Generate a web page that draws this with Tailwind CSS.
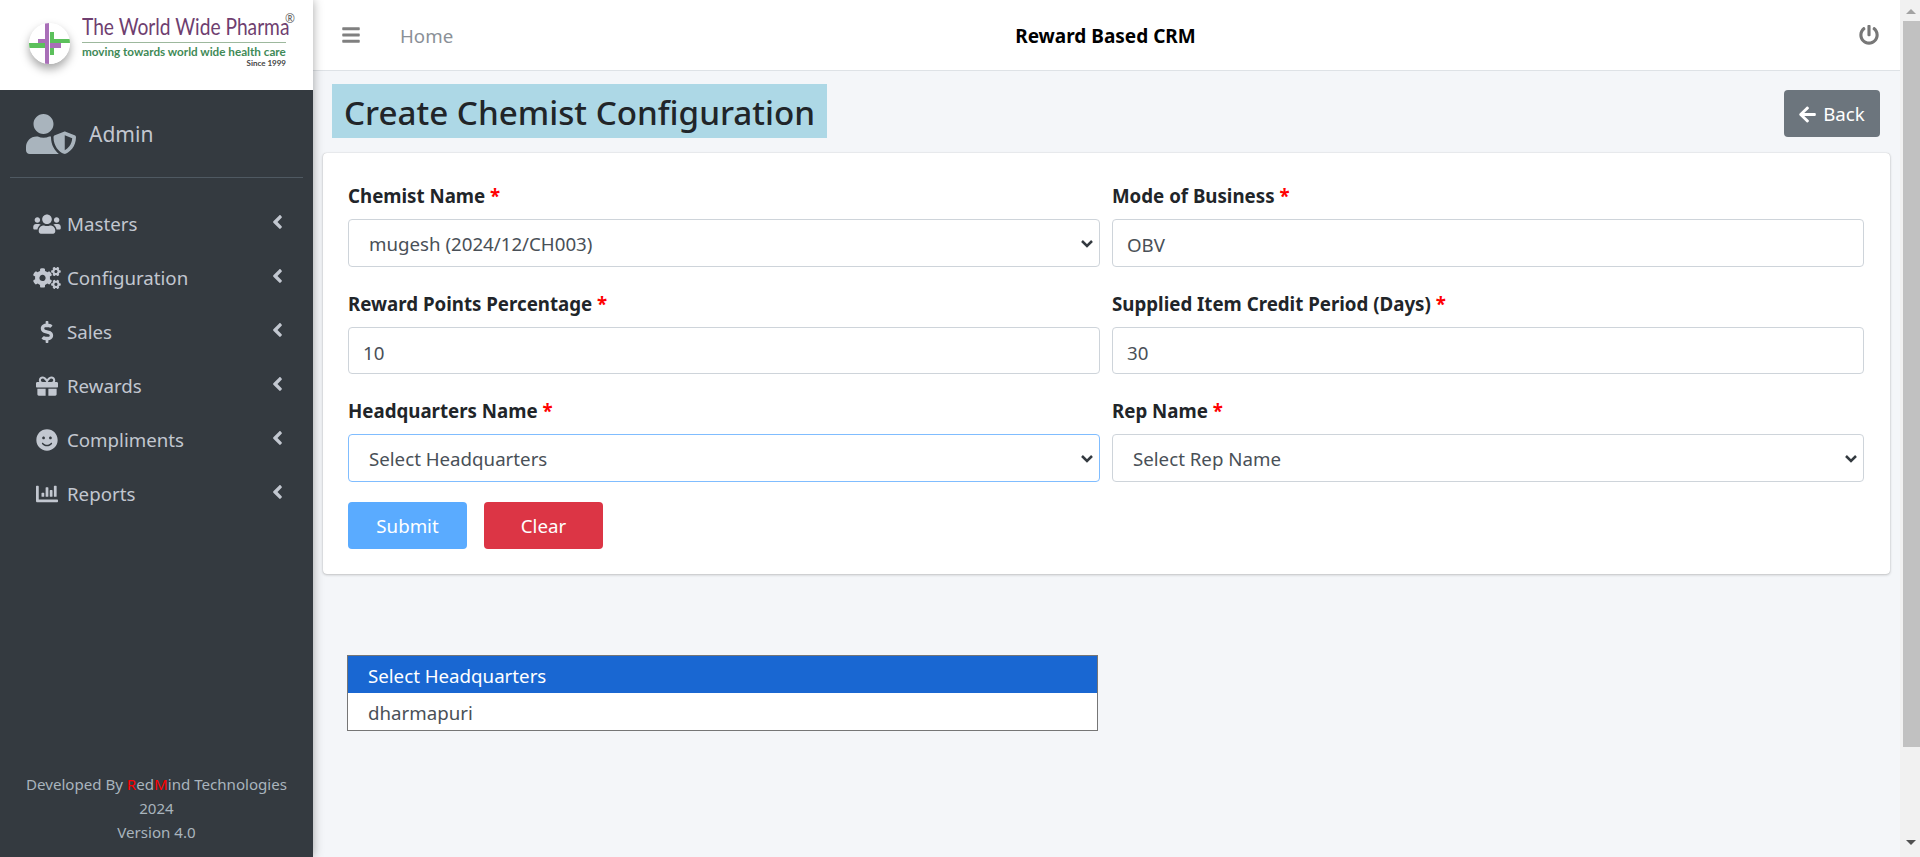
<!DOCTYPE html>
<html lang="en">
<head>
    <meta charset="UTF-8">
    <title>Create Chemist Configuration</title>
    <script src="https://cdn.jsdelivr.net/npm/@tailwindcss/browser@4"></script>
</head>
<body class="h-[857px] overflow-hidden bg-[#f4f6f9] font-['Noto_Sans',sans-serif] text-[18.7px] text-[#212529]">
    <div class="flex h-[857px]">
        <!-- Sidebar -->
        <aside class="z-10 flex w-[313px] shrink-0 flex-col bg-[#343a40] shadow-[0_0_10px_rgba(0,0,0,0.35)]">
            <div class="flex h-[90px] items-start bg-white pl-[29px] pt-[14px]">
                <svg class="mt-[9px] h-[41px] w-[41px] shrink-0 rounded-full shadow-[0_5px_10px_rgba(0,0,0,0.35)]" viewBox="0 0 41 41">
                    <circle cx="20.5" cy="20.5" r="20.5" fill="#fff"/>
                    <path d="M0 20h20v5H0zM25 16h16v4H25zM21 9h4v23h-4z" fill="#5cc05c"/>
                    <path d="M16 0h4v41h-4zM9 16h7v4H9zM21 20h11v5H21z" fill="#a96fb8"/>
                </svg>
                <div class="ml-[12px] w-[204px] font-['Lato',sans-serif]">
                    <div class="relative mt-[3px] h-[24px] origin-bottom scale-y-125 text-[19.2px] leading-[24px] whitespace-nowrap text-[#6f3f70]">The World Wide Pharma</div>
                    <div class="mt-[1px] border-t border-[#9db89d] pt-[1px] text-[11.7px] leading-[14px] font-bold whitespace-nowrap text-[#3f8a57]">moving towards world wide health care</div>
                    <div class="text-right text-[8px] leading-[10px] font-bold text-[#444]">Since 1999</div>
                </div>
                <span class="ml-[-1px] mt-[-2px] text-[12px] leading-[14px] text-[#666]">®</span>
            </div>

            <div class="mx-[10px] flex h-[88px] items-center border-b border-[#4f5962] pl-[16px]">
                <svg class="h-[40px] w-[50px] fill-[#a9b4bd]" viewBox="0 0 640 512"><path d="M622.3 271.1l-115.2-45c-3.500-1.400-7.300-2.100-11.100-2.100s-7.600.7-11.100 2.100l-115.2 45c-10.700 4.200-17.700 14-17.700 24.900 0 111.600 68.700 188.800 132.900 213.900 3.500 1.400 7.300 2.100 11.100 2.100s7.600-.7 11.100-2.100C558.400 484.900 640 416.500 640 296c0-10.900-7-20.700-17.700-24.900zM496 462.400V273.300l95.500 37.300c-5.600 87.100-60.900 135.400-95.500 151.800zM224 256c70.700 0 128-57.300 128-128S294.700 0 224 0 96 57.300 96 128s57.300 128 128 128zm96 40c0-2.500.8-4.800 1.100-7.200-2.500-.1-4.900-.8-7.500-.8h-16.700c-22.200 10.200-46.900 16-72.900 16s-50.600-5.800-72.900-16h-16.700C60.200 288 0 348.200 0 422.400V464c0 26.500 21.500 48 48 48h352c6.800 0 13.300-1.500 19.100-4-54-42.900-99.100-116.700-99.100-212z"/></svg>
                <span class="ml-[13px] pt-[3px] text-[21px] text-[#c2c7d0]">Admin</span>
            </div>

            <nav class="mt-[19px] flex flex-col text-[#c2c7d0]">
                <a class="flex h-[54px] items-center pl-[33px] pr-[30px]">
                    <span class="flex w-[28px] justify-center"><svg class="h-[22px] w-[28px] fill-[#c2c7d0]" viewBox="0 0 640 512"><path d="M96 224c35.300 0 64-28.700 64-64s-28.700-64-64-64-64 28.700-64 64 28.700 64 64 64zm448 0c35.300 0 64-28.700 64-64s-28.700-64-64-64-64 28.700-64 64 28.700 64 64 64zm32 32h-64c-17.600 0-33.500 7.100-45.100 18.600 40.300 22.100 68.900 62 75.100 109.400h66c17.700 0 32-14.300 32-32v-32c0-35.300-28.700-64-64-64zm-256 0c61.900 0 112-50.100 112-112S381.900 32 320 32 208 82.100 208 144s50.100 112 112 112zm76.800 32h-8.300c-20.800 10-43.900 16-68.500 16s-47.600-6-68.500-16h-8.300C179.600 288 128 339.600 128 403.200V432c0 26.500 21.500 48 48 48h288c26.500 0 48-21.500 48-48v-28.800c0-63.600-51.600-115.200-115.200-115.200zm-223.700-13.400C161.500 263.100 145.600 256 128 256H64c-35.300 0-64 28.700-64 64v32c0 17.700 14.300 32 32 32h65.900c6.300-47.400 34.900-87.300 75.200-109.400z"/></svg></span>
                    <span class="ml-[6px] flex-1">Masters</span>
                    <svg class="mb-[5px] h-[22px] w-[11px] fill-[#c2c7d0]" viewBox="0 0 256 512"><path d="M31.700 239l136-136c9.400-9.400 24.600-9.400 33.900 0l22.600 22.600c9.400 9.400 9.400 24.600 0 33.900L127.900 256l96.400 96.400c9.400 9.400 9.400 24.600 0 33.900L201.700 409c-9.400 9.400-24.600 9.400-33.900 0l-136-136c-9.500-9.400-9.500-24.600-.1-34z"/></svg>
                </a>
                <a class="flex h-[54px] items-center pl-[33px] pr-[30px]">
                    <span class="flex w-[28px] justify-center"><svg class="h-[22px] w-[28px] fill-[#c2c7d0]" viewBox="0 0 640 512"><path d="M512.100 191l-8.200 14.300c-3 5.300-9.400 7.500-15.100 5.400-11.800-4.400-22.600-10.700-32.100-18.600-4.600-3.800-5.800-10.500-2.800-15.700l8.200-14.300c-6.900-8-12.300-17.300-15.900-27.400h-16.500c-6 0-11.200-4.300-12.200-10.300-2-12-2.100-24.600 0-37.100 1-6 6.200-10.400 12.200-10.400h16.500c3.600-10.100 9-19.400 15.900-27.400l-8.200-14.300c-3-5.200-1.900-11.900 2.800-15.700 9.500-7.900 20.400-14.200 32.100-18.600 5.700-2.100 12.100.1 15.100 5.400l8.200 14.300c10.500-1.900 21.200-1.900 31.700 0L552 6.300c3-5.300 9.400-7.500 15.100-5.400 11.800 4.400 22.600 10.700 32.100 18.600 4.600 3.800 5.800 10.500 2.800 15.700l-8.200 14.300c6.900 8 12.300 17.300 15.900 27.400h16.500c6 0 11.200 4.300 12.200 10.300 2 12 2.100 24.600 0 37.100-1 6-6.200 10.400-12.200 10.400h-16.500c-3.600 10.100-9 19.400-15.900 27.400l8.200 14.300c3 5.200 1.900 11.900-2.800 15.700-9.500 7.900-20.400 14.200-32.100 18.600-5.700 2.100-12.100-.1-15.100-5.400l-8.200-14.300c-10.400 1.900-21.200 1.900-31.700 0zm-10.500-58.800c38.500 29.600 82.400-14.300 52.800-52.800-38.500-29.700-82.400 14.300-52.800 52.800zM386.300 286.100l33.700 16.800c10.100 5.800 14.500 18.100 10.500 29.100-8.900 24.200-26.400 46.400-42.600 65.800-7.400 8.900-20.200 11.100-30.300 5.300l-29.100-16.800c-16 13.700-34.600 24.600-54.900 31.700v33.600c0 11.600-8.300 21.600-19.700 23.600-24.600 4.200-50.400 4.400-75.900 0-11.500-2-20-11.900-20-23.600V418c-20.300-7.200-38.900-18-54.900-31.700L74 403c-10 5.800-22.900 3.600-30.300-5.300-16.200-19.400-33.300-41.600-42.200-65.700-4-10.900.4-23.200 10.500-29.100l33.300-16.800c-3.900-20.900-3.900-42.400 0-63.400L12 205.800c-10.100-5.800-14.600-18.100-10.500-29 8.900-24.200 26-46.400 42.200-65.800 7.400-8.900 20.200-11.100 30.300-5.300l29.100 16.800c16-13.700 34.600-24.600 54.900-31.700V57.100c0-11.500 8.200-21.500 19.600-23.500 24.600-4.200 50.500-4.400 76-.1 11.500 2 20 11.900 20 23.600v33.600c20.300 7.200 38.900 18 54.900 31.700l29.100-16.800c10-5.800 22.900-3.600 30.300 5.300 16.200 19.400 33.200 41.600 42.100 65.800 4 10.900.1 23.200-10 29.100l-33.700 16.800c3.900 21 3.900 42.500 0 63.500zm-117.600 21.100c59.200-77-28.700-164.900-105.700-105.700-59.200 77 28.700 164.900 105.700 105.700zm243.400 182.700l-8.200 14.300c-3 5.300-9.400 7.500-15.100 5.400-11.800-4.400-22.600-10.700-32.100-18.600-4.600-3.800-5.800-10.500-2.800-15.700l8.200-14.300c-6.900-8-12.300-17.300-15.900-27.400h-16.500c-6 0-11.200-4.300-12.200-10.300-2-12-2.100-24.600 0-37.100 1-6 6.200-10.400 12.200-10.400h16.500c3.600-10.100 9-19.400 15.900-27.400l-8.200-14.300c-3-5.200-1.900-11.900 2.800-15.700 9.500-7.900 20.400-14.200 32.100-18.600 5.700-2.100 12.100.1 15.100 5.400l8.200 14.300c10.500-1.900 21.200-1.900 31.700 0l8.200-14.300c3-5.300 9.400-7.500 15.100-5.400 11.800 4.400 22.600 10.700 32.100 18.600 4.600 3.800 5.800 10.500 2.800 15.700l-8.200 14.300c6.900 8 12.300 17.300 15.900 27.400h16.500c6 0 11.200 4.300 12.200 10.300 2 12 2.100 24.600 0 37.100-1 6-6.200 10.400-12.200 10.400h-16.500c-3.600 10.100-9 19.400-15.900 27.400l8.200 14.300c3 5.200 1.900 11.900-2.800 15.700-9.500 7.900-20.400 14.200-32.100 18.600-5.700 2.100-12.100-.1-15.100-5.400l-8.200-14.300c-10.400 1.900-21.200 1.900-31.700 0zM501.600 431c38.500 29.600 82.400-14.300 52.800-52.800-38.500-29.600-82.400 14.300-52.800 52.800z"/></svg></span>
                    <span class="ml-[6px] flex-1">Configuration</span>
                    <svg class="mb-[5px] h-[22px] w-[11px] fill-[#c2c7d0]" viewBox="0 0 256 512"><path d="M31.700 239l136-136c9.400-9.400 24.600-9.400 33.900 0l22.600 22.600c9.400 9.400 9.400 24.600 0 33.900L127.900 256l96.400 96.400c9.400 9.400 9.400 24.600 0 33.900L201.700 409c-9.400 9.400-24.600 9.400-33.900 0l-136-136c-9.500-9.400-9.500-24.600-.1-34z"/></svg>
                </a>
                <a class="flex h-[54px] items-center pl-[33px] pr-[30px]">
                    <span class="flex w-[28px] justify-center"><svg class="h-[22px] w-[14px] fill-[#c2c7d0]" viewBox="0 0 288 512"><path d="M209.200 233.400l-108-31.600C88.700 198.200 80 186.500 80 173.500c0-16.300 13.200-29.500 29.500-29.500h66.300c12.200 0 24.200 3.700 34.200 10.500 6.100 4.100 14.300 3.100 19.500-2l34.800-34c7.100-6.900 6.100-18.400-1.800-24.500C238 74.800 207.400 64.100 176 64V16c0-8.800-7.200-16-16-16h-32c-8.800 0-16 7.200-16 16v48h-2.500C45.800 64-5.400 118.700.5 183.600c4.200 46.100 39.400 83.600 83.800 96.600l102.500 30c12.500 3.700 21.200 15.300 21.200 28.300 0 16.300-13.200 29.500-29.500 29.500h-66.300C100 368 88 364.300 78 357.500c-6.100-4.100-14.300-3.100-19.500 2l-34.800 34c-7.100 6.900-6.100 18.400 1.800 24.500 24.500 19.200 55.100 29.900 86.500 30v48c0 8.800 7.200 16 16 16h32c8.800 0 16-7.200 16-16v-48.200c46.600-.9 90.300-28.600 105.700-72.700 21.500-61.600-14.600-124.800-72.500-141.700z"/></svg></span>
                    <span class="ml-[6px] flex-1">Sales</span>
                    <svg class="mb-[5px] h-[22px] w-[11px] fill-[#c2c7d0]" viewBox="0 0 256 512"><path d="M31.700 239l136-136c9.400-9.400 24.600-9.400 33.900 0l22.600 22.600c9.400 9.400 9.400 24.600 0 33.900L127.900 256l96.400 96.400c9.400 9.400 9.400 24.600 0 33.900L201.700 409c-9.400 9.400-24.600 9.400-33.900 0l-136-136c-9.500-9.400-9.500-24.600-.1-34z"/></svg>
                </a>
                <a class="flex h-[54px] items-center pl-[33px] pr-[30px]">
                    <span class="flex w-[28px] justify-center"><svg class="h-[22px] w-[22px] fill-[#c2c7d0]" viewBox="0 0 512 512"><path d="M32 448c0 17.700 14.300 32 32 32h160V320H32v128zm256 32h160c17.700 0 32-14.300 32-32V320H288v160zm192-320h-42.100c6.200-12.100 10.100-25.500 10.100-40 0-48.500-39.500-88-88-88-41.600 0-68.500 21.300-103 68.300-34.500-47-61.400-68.300-103-68.300-48.500 0-88 39.500-88 88 0 14.500 3.800 27.900 10.100 40H32c-17.700 0-32 14.300-32 32v80c0 8.800 7.200 16 16 16h480c8.800 0 16-7.200 16-16v-80c0-17.700-14.300-32-32-32zm-326.100 0c-22.100 0-40-17.900-40-40s17.900-40 40-40c19.900 0 34.600 3.300 86.100 80h-86.100zm206.100 0h-86.100c51.400-76.500 65.700-80 86.100-80 22.100 0 40 17.900 40 40s-17.900 40-40 40z"/></svg></span>
                    <span class="ml-[6px] flex-1">Rewards</span>
                    <svg class="mb-[5px] h-[22px] w-[11px] fill-[#c2c7d0]" viewBox="0 0 256 512"><path d="M31.700 239l136-136c9.400-9.400 24.600-9.400 33.900 0l22.600 22.600c9.400 9.400 9.400 24.600 0 33.900L127.900 256l96.400 96.400c9.400 9.400 9.400 24.600 0 33.900L201.700 409c-9.400 9.400-24.600 9.400-33.900 0l-136-136c-9.500-9.400-9.500-24.600-.1-34z"/></svg>
                </a>
                <a class="flex h-[54px] items-center pl-[33px] pr-[30px]">
                    <span class="flex w-[28px] justify-center"><svg class="h-[22px] w-[22px] fill-[#c2c7d0]" viewBox="0 0 496 512"><path d="M248 8C111 8 0 119 0 256s111 248 248 248 248-111 248-248S385 8 248 8zm80 168c17.700 0 32 14.300 32 32s-14.300 32-32 32-32-14.300-32-32 14.300-32 32-32zm-160 0c17.700 0 32 14.300 32 32s-14.300 32-32 32-32-14.300-32-32 14.300-32 32-32zm194.800 170.200C334.300 380.400 292.500 400 248 400s-86.300-19.600-114.800-53.800c-13.600-16.300 11-36.700 24.600-20.500 22.400 26.900 55.200 42.200 90.200 42.200s67.800-15.400 90.200-42.200c13.400-16.200 38.100 4.200 24.600 20.500z"/></svg></span>
                    <span class="ml-[6px] flex-1">Compliments</span>
                    <svg class="mb-[5px] h-[22px] w-[11px] fill-[#c2c7d0]" viewBox="0 0 256 512"><path d="M31.700 239l136-136c9.400-9.400 24.600-9.400 33.900 0l22.600 22.600c9.400 9.400 9.400 24.600 0 33.900L127.900 256l96.400 96.400c9.400 9.400 9.400 24.600 0 33.900L201.700 409c-9.400 9.400-24.600 9.400-33.900 0l-136-136c-9.500-9.400-9.500-24.600-.1-34z"/></svg>
                </a>
                <a class="flex h-[54px] items-center pl-[33px] pr-[30px]">
                    <span class="flex w-[28px] justify-center"><svg class="h-[22px] w-[22px] fill-[#c2c7d0]" viewBox="0 0 512 512"><path d="M332.800 320h38.400c6.400 0 12.800-6.400 12.800-12.800V172.800c0-6.400-6.400-12.800-12.800-12.800h-38.400c-6.400 0-12.800 6.400-12.800 12.800v134.400c0 6.400 6.400 12.800 12.800 12.800zm96 0h38.400c6.400 0 12.800-6.400 12.800-12.800V76.800c0-6.400-6.400-12.800-12.800-12.800h-38.400c-6.400 0-12.800 6.400-12.800 12.800v230.400c0 6.400 6.400 12.800 12.800 12.800zm-288 0h38.400c6.400 0 12.800-6.400 12.800-12.800v-70.400c0-6.400-6.400-12.800-12.800-12.800h-38.400c-6.400 0-12.800 6.400-12.800 12.800v70.400c0 6.400 6.400 12.800 12.800 12.800zm96 0h38.400c6.400 0 12.800-6.400 12.800-12.800V108.800c0-6.400-6.400-12.800-12.800-12.800h-38.400c-6.400 0-12.800 6.400-12.800 12.800v198.400c0 6.400 6.400 12.800 12.800 12.800zM496 384H64V80c0-8.840-7.160-16-16-16H16C7.160 64 0 71.160 0 80v336c0 17.670 14.330 32 32 32h464c8.840 0 16-7.160 16-16v-32c0-8.840-7.160-16-16-16z"/></svg></span>
                    <span class="ml-[6px] flex-1">Reports</span>
                    <svg class="mb-[5px] h-[22px] w-[11px] fill-[#c2c7d0]" viewBox="0 0 256 512"><path d="M31.700 239l136-136c9.400-9.400 24.600-9.400 33.900 0l22.600 22.600c9.400 9.400 9.400 24.600 0 33.900L127.900 256l96.400 96.400c9.400 9.400 9.400 24.600 0 33.900L201.700 409c-9.400 9.400-24.600 9.400-33.900 0l-136-136c-9.500-9.400-9.500-24.600-.1-34z"/></svg>
                </a>
            </nav>

            <div class="mt-auto pb-[13px] text-center text-[15.1px] leading-[24px] text-[#a9b4bd]">
                <div>Developed By <span class="text-[#ff0000]">R</span>ed<span class="text-[#ff0000]">M</span>ind Technologies</div>
                <div>2024</div>
                <div>Version 4.0</div>
            </div>
        </aside>

        <!-- Main -->
        <div class="relative flex min-w-0 flex-1 flex-col">
            <header class="flex h-[71px] shrink-0 items-center border-b border-[#dee2e6] bg-white pl-[29px] pr-[21px]">
                <svg class="h-[20px] w-[18px] fill-[#808080]" viewBox="0 0 448 512"><path d="M16 132h416c8.837 0 16-7.163 16-16V76c0-8.837-7.163-16-16-16H16C7.163 60 0 67.163 0 76v40c0 8.837 7.163 16 16 16zm0 160h416c8.837 0 16-7.163 16-16v-40c0-8.837-7.163-16-16-16H16c-8.837 0-16 7.163-16 16v40c0 8.837 7.163 16 16 16zm0 160h416c8.837 0 16-7.163 16-16v-40c0-8.837-7.163-16-16-16H16c-8.837 0-16 7.163-16 16v40c0 8.837 7.163 16 16 16z"/></svg>
                <span class="ml-[40px] pt-[2px] text-[#8a9097]">Home</span>
                <span class="ml-[562px] pt-[2px] text-[19px] font-bold text-black">Reward Based CRM</span>
                <svg class="ml-auto h-[20px] w-[20px] fill-[#777]" viewBox="0 0 512 512"><path d="M400 54.100c63 45 104 118.600 104 201.900 0 136.800-110.800 247.700-247.500 248C120 504.300 8.200 393 8 256.400 7.900 173.100 48.900 99.300 111.800 54.200c11.700-8.300 28-4.800 35 7.700L162.600 90c5.900 10.500 3.100 23.800-6.600 31-41.500 30.800-68 79.600-68 134.900-.1 92.300 74.500 168.100 168 168.100 91.600 0 168.600-74.200 168-169.100-.3-51.800-24.700-101.800-68.100-134-9.700-7.200-12.400-20.500-6.500-30.900l15.800-28.100c7-12.400 23.200-16.100 34.800-7.900zM296 264V24c0-13.300-10.700-24-24-24h-32c-13.300 0-24 10.700-24 24v240c0 13.300 10.700 24 24 24h32c13.300 0 24-10.700 24-24z"/></svg>
            </header>

            <main class="px-[10px] pt-[13px]">
                <div class="flex items-start justify-between pl-[9px] pr-[10px]">
                    <h1 class="h-[54px] bg-[#add8e6] px-[12px] pt-[3px] text-[33.2px] leading-[52px] font-medium whitespace-nowrap">Create Chemist Configuration</h1>
                    <button class="mt-[6px] flex h-[47px] w-[96px] items-center justify-center gap-[7px] rounded-[4px] bg-[#6c757d] pt-[1px] text-white">
                        <svg class="h-[19px] w-[17px] fill-white" viewBox="0 0 448 512"><path d="M257.500 445.100l-22.200 22.200c-9.400 9.400-24.600 9.400-33.900 0L7 273c-9.400-9.400-9.400-24.600 0-33.900L201.400 44.700c9.400-9.400 24.600-9.400 33.900 0l22.200 22.200c9.500 9.500 9.300 25-.4 34.300L136.600 216H424c13.300 0 24 10.700 24 24v32c0 13.300-10.700 24-24 24H136.600l120.500 114.800c9.800 9.300 10 24.800.4 34.300z"/></svg>
                        Back
                    </button>
                </div>

                <form class="mt-[15px] h-[421px] rounded-[4px] bg-white pl-[25px] pr-[26px] pt-[27px] shadow-[0_0_1px_rgba(0,0,0,0.25),0_1px_3px_rgba(0,0,0,0.2)]">
                    <div class="grid grid-cols-2 gap-x-[12px]">
                        <div class="h-[108px]">
                            <label class="block h-[39px] pt-[2px] leading-[27px] font-bold">Chemist Name <span class="text-[#ff0000]">*</span></label>
                            <div class="relative">
                                <select class="block h-[48px] w-full appearance-none rounded-[4px] border border-[#ced4da] bg-white px-[20px] pt-[3px] text-[#495057]"><option>mugesh (2024/12/CH003)</option></select>
                                <svg class="absolute right-[7px] top-[21px] h-[8px] w-[12px] fill-none stroke-[#343a40] stroke-[2.5]" viewBox="0 0 12 8"><path d="M1 1l5 5 5-5"/></svg>
                            </div>
                        </div>
                        <div class="h-[108px]">
                            <label class="block h-[39px] pt-[2px] leading-[27px] font-bold">Mode of Business <span class="text-[#ff0000]">*</span></label>
                            <input class="block h-[48px] w-full rounded-[4px] border border-[#ced4da] bg-white px-[14px] pt-[3px] text-[#495057]" value="OBV">
                        </div>
                        <div class="h-[107px]">
                            <label class="block h-[39px] pt-[2px] leading-[27px] font-bold">Reward Points Percentage <span class="text-[#ff0000]">*</span></label>
                            <input class="block h-[47px] w-full rounded-[4px] border border-[#ced4da] bg-white px-[14px] pt-[3px] text-[#495057]" value="10">
                        </div>
                        <div class="h-[107px]">
                            <label class="block h-[39px] pt-[2px] leading-[27px] font-bold">Supplied Item Credit Period (Days) <span class="text-[#ff0000]">*</span></label>
                            <input class="block h-[47px] w-full rounded-[4px] border border-[#ced4da] bg-white px-[14px] pt-[3px] text-[#495057]" value="30">
                        </div>
                        <div class="h-[108px]">
                            <label class="block h-[39px] pt-[2px] leading-[27px] font-bold">Headquarters Name <span class="text-[#ff0000]">*</span></label>
                            <div class="relative">
                                <select class="block h-[48px] w-full appearance-none rounded-[4px] border border-[#80bdff] bg-white px-[20px] pt-[3px] text-[#495057]"><option>Select Headquarters</option></select>
                                <svg class="absolute right-[7px] top-[21px] h-[8px] w-[12px] fill-none stroke-[#343a40] stroke-[2.5]" viewBox="0 0 12 8"><path d="M1 1l5 5 5-5"/></svg>
                            </div>
                        </div>
                        <div class="h-[108px]">
                            <label class="block h-[39px] pt-[2px] leading-[27px] font-bold">Rep Name <span class="text-[#ff0000]">*</span></label>
                            <div class="relative">
                                <select class="block h-[48px] w-full appearance-none rounded-[4px] border border-[#ced4da] bg-white px-[20px] pt-[3px] text-[#495057]"><option>Select Rep Name</option></select>
                                <svg class="absolute right-[7px] top-[21px] h-[8px] w-[12px] fill-none stroke-[#343a40] stroke-[2.5]" viewBox="0 0 12 8"><path d="M1 1l5 5 5-5"/></svg>
                            </div>
                        </div>
                    </div>
                    <div class="mt-[-1px] flex gap-[17px]">
                        <button type="button" class="h-[47px] w-[119px] rounded-[4px] bg-[#5aabff] pt-[1px] text-white">Submit</button>
                        <button type="button" class="h-[47px] w-[119px] rounded-[4px] bg-[#dc3545] pt-[1px] text-white">Clear</button>
                    </div>
                </form>
            </main>

            <!-- Open select list -->
            <ul class="absolute left-[34px] top-[655px] w-[751px] border border-[#767676] bg-white text-[#495057]">
                <li class="h-[37px] bg-[#1967d2] pl-[20px] leading-[39px] text-white">Select Headquarters</li>
                <li class="h-[37px] pl-[20px] leading-[39px]">dharmapuri</li>
            </ul>
        </div>

        <!-- Scrollbar -->
        <div class="flex w-[20px] shrink-0 flex-col items-center bg-[#f1f1f1] pl-[2px]">
            <div class="mt-[9px] h-0 w-0 border-x-[5px] border-b-[5px] border-x-transparent border-b-[#a3a3a3]"></div>
            <div class="mt-[7px] h-[726px] w-[17px] bg-[#c1c1c1]"></div>
            <div class="mt-[93px] h-0 w-0 border-x-[5px] border-t-[5px] border-x-transparent border-t-[#505050]"></div>
        </div>
    </div>
</body>
</html>
